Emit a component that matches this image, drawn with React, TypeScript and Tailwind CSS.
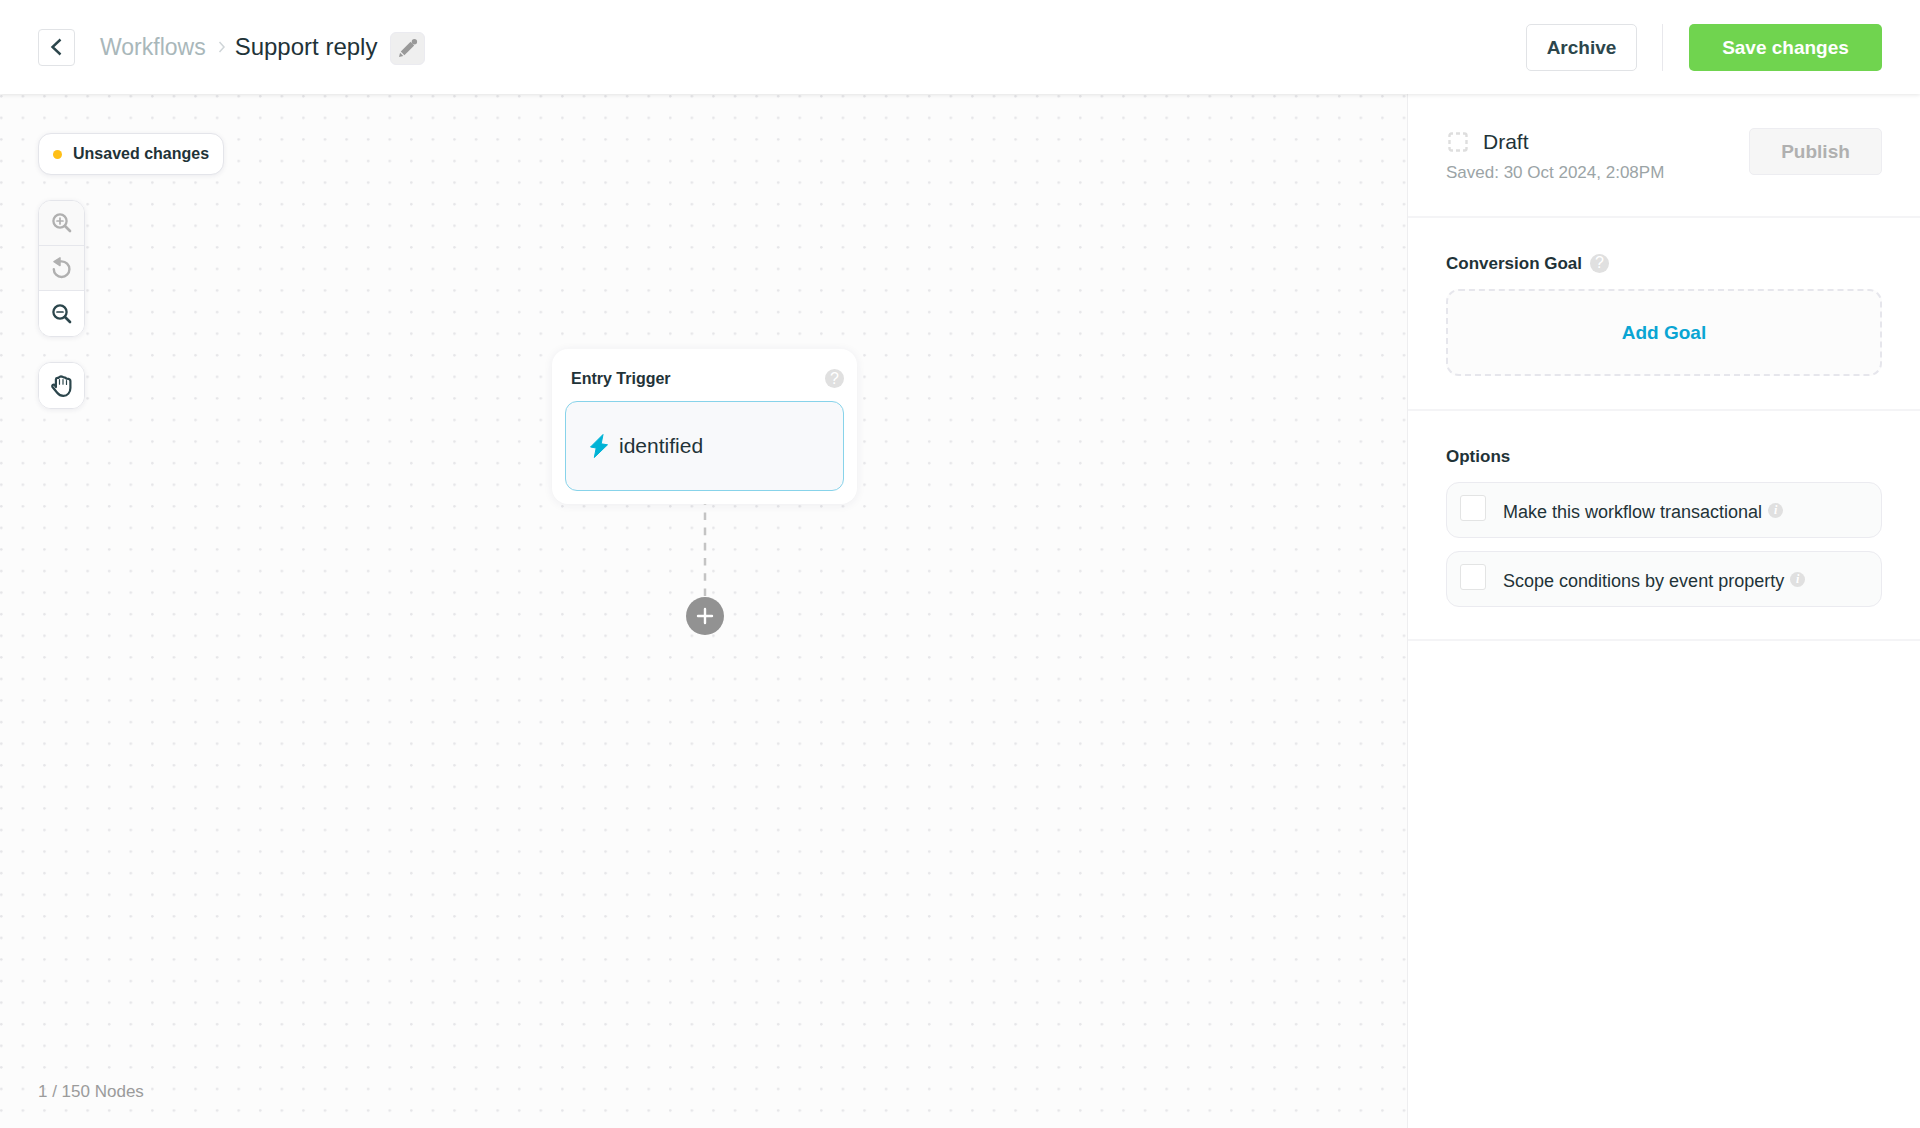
import type { ReactNode } from 'react'

function HelpBadge() {
  return (
    <button
      type="button"
      aria-label="Help"
      className="flex size-[19px] shrink-0 items-center justify-center rounded-full bg-[#e0e0e0] text-base leading-none text-white"
    >
      ?
    </button>
  )
}

function InfoBadge() {
  return (
    <span className="flex size-[15px] shrink-0 items-center justify-center rounded-full bg-[#e0e0e0] font-['Liberation_Serif',serif] text-xs leading-none font-bold text-white italic">
      i
    </span>
  )
}

function MagnifierIcon({ plus = false }: { plus?: boolean }) {
  return (
    <svg width="20" height="20" viewBox="0 0 20 20" fill="none" stroke="currentColor" strokeLinecap="round">
      <circle cx="8" cy="8" r="6.6" strokeWidth="2.3" />
      <path d="M13 13l5 5" strokeWidth="2.7" />
      <path d={plus ? 'M5 8h6M8 5v6' : 'M5 8h6'} strokeWidth="1.7" />
    </svg>
  )
}

function ResetIcon() {
  return (
    <svg width="19" height="22" viewBox="0 0 19 22" fill="none" stroke="currentColor">
      <path d="M1.8 12.2a7.8 7.8 0 1 0 7.8-7.8H8" strokeWidth="2.4" strokeLinecap="round" />
      <path d="M2 4.6L8 .9v7.6z" fill="currentColor" strokeWidth="1.5" strokeLinejoin="round" />
    </svg>
  )
}

function HandIcon() {
  return (
    <svg width="21" height="22" viewBox="0 0 21 22" fill="none" stroke="currentColor" strokeLinecap="round" strokeLinejoin="round">
      <path
        d="M4.9 12V4.6c0-1 .6-1.6 1.5-1.7l1.2-.1c.4-.9 1.2-1.4 2.4-1.5 1.2 0 2 .4 2.5 1.1 1.4-.1 2.5.3 3 1.3 2.2 0 3.9.6 3.9 2.4v6.9c0 4.5-2.9 7.9-7 7.9-3 0-4.7-1.2-6.2-3.1L1.5 12c-.8-1.6.7-2.8 2-2.2z"
        strokeWidth="2.2"
      />
      <path d="M8.5 4.5v4.7M12 4.5v4.7M15.5 5.5v3.9" strokeWidth="1.2" />
    </svg>
  )
}

function PencilIcon() {
  return (
    <svg width="20" height="20" viewBox="0 0 20 20" fill="#999">
      <path d="M1 19l1.1-4.2 3.2 3.1z" />
      <path d="M2.8 13.4L12.6 3.8l3.6 3.6L6.4 17.200z" />
      <circle cx="16.4" cy="3.700" r="2.700" />
    </svg>
  )
}

function ToolButton({ label, disabled, children }: { label: string; disabled?: boolean; children: ReactNode }) {
  return (
    <button
      type="button"
      aria-label={label}
      disabled={disabled}
      className="flex h-[45px] w-[45px] items-center justify-center bg-white text-[#2c464c] disabled:bg-[#f9f9f9] disabled:text-[#b0b0b0]"
    >
      {children}
    </button>
  )
}

function Header() {
  return (
    <header className="relative z-10 flex h-[94px] shrink-0 items-center justify-between bg-white px-[38px] shadow-[0_1px_4px_rgba(0,0,0,0.1)]">
      <nav className="flex items-center text-2xl">
        <button
          type="button"
          aria-label="Back"
          className="mr-[25px] flex size-[37px] items-center justify-center rounded border border-[#e1e3e6] pr-[2px] text-[#2c464c]"
        >
          <svg width="12" height="18" viewBox="0 0 12 18" fill="none" stroke="currentColor" strokeWidth="2.4">
            <path d="M10.500 1.500L2.500 9l8 7.500" />
          </svg>
        </button>
        <a href="#workflows" className="text-[23px] text-[#a9b7ba]">
          Workflows
        </a>
        <svg className="mr-[9px] ml-3" width="8" height="12" viewBox="0 0 8 12" fill="none" stroke="#cfd5d8" strokeWidth="1.500">
          <path d="M1.500 1l4.500 5-4.500 5" />
        </svg>
        <h1 className="text-[#1f3338]">Support reply</h1>
        <button
          type="button"
          aria-label="Rename workflow"
          className="mt-[2px] ml-[13px] flex h-[33px] w-[35px] items-center justify-center rounded-md border border-[#ebebf0] bg-[#efefef]"
        >
          <PencilIcon />
        </button>
      </nav>
      <div className="flex h-[47px] items-stretch text-[19px] font-bold">
        <button type="button" className="w-[111px] rounded-[5px] border border-[#e1e3e6] pt-[2px] text-[#2c464c]">
          Archive
        </button>
        <div className="mr-[26px] ml-[25px] w-px bg-[#e8e8ec]" />
        <button type="button" className="w-[193px] rounded-[5px] bg-[#70d44f] pt-[2px] text-white">
          Save changes
        </button>
      </div>
    </header>
  )
}

function CanvasTools() {
  return (
    <div className="absolute top-[39px] left-[38px] flex flex-col items-start">
      <div className="flex h-[42px] items-center gap-[11px] rounded-[13px] border border-[#e4e5ea] bg-white px-[14px] text-base font-bold text-[#1f3338] shadow-[0_1px_5px_rgba(40,40,80,0.08)]">
        <span className="size-[9px] rounded-full bg-[#ffbf17]" />
        Unsaved changes
      </div>
      <div className="mt-[25px] flex flex-col divide-y divide-[#e6e7ec] overflow-hidden rounded-[13px] border border-[#e4e5ea] shadow-[0_1px_5px_rgba(40,40,80,0.08)]">
        <ToolButton label="Zoom in" disabled>
          <MagnifierIcon plus />
        </ToolButton>
        <ToolButton label="Reset zoom" disabled>
          <ResetIcon />
        </ToolButton>
        <ToolButton label="Zoom out">
          <MagnifierIcon />
        </ToolButton>
      </div>
      <div className="mt-[25px] overflow-hidden rounded-[13px] border border-[#e4e5ea] shadow-[0_1px_5px_rgba(40,40,80,0.08)]">
        <ToolButton label="Pan">
          <HandIcon />
        </ToolButton>
      </div>
    </div>
  )
}

function Canvas() {
  return (
    <main className="relative flex flex-1 flex-col items-center overflow-hidden bg-[#fcfcfc] pt-[255px] pl-[2px]">
      {/* dot grid */}
      <svg className="absolute inset-0 size-full" aria-hidden="true">
        <defs>
          <pattern id="dots" width="21.58" height="21.58" patternUnits="userSpaceOnUse">
            <circle cx="1.3" cy="2.3" r="1.300" fill="#e5e5e8" />
          </pattern>
        </defs>
        <rect width="100%" height="100%" fill="url(#dots)" />
      </svg>

      <CanvasTools />

      <section className="relative w-[305px] rounded-2xl bg-white p-[13px] shadow-[0_1px_10px_rgba(40,40,80,0.07)]">
        <div className="flex h-[39px] items-center justify-between pb-[6px] pl-[6px]">
          <h2 className="text-base font-bold text-[#1f3338]">Entry Trigger</h2>
          <HelpBadge />
        </div>
        <button
          type="button"
          className="flex h-[90px] w-full items-center gap-[10px] rounded-xl border border-[#87d3ea] bg-[#f8f9fb] px-[23px] text-[21px] text-[#1f3338]"
        >
          <svg width="20" height="26" viewBox="0 0 20 26" fill="#00b3d6" stroke="#00b3d6" strokeWidth="1" strokeLinejoin="round">
            <path d="M14 1.500L1.500 14l5.700 1L5.300 24.500 18.500 11.800l-6.300-1z" />
          </svg>
          identified
        </button>
      </section>

      <svg className="relative" width="4" height="93" viewBox="0 0 4 93">
        <path d="M2 0v93" stroke="#c4c4c4" strokeWidth="2.500" strokeDasharray="7.600 7.600" strokeDashoffset="6.800" />
      </svg>
      <button
        type="button"
        aria-label="Add node"
        className="relative flex size-[38px] items-center justify-center rounded-full bg-[#929292] text-white"
      >
        <svg width="18" height="18" viewBox="0 0 18 18" stroke="currentColor" strokeWidth="2.400" strokeLinecap="round">
          <path d="M9 2v14M2 9h14" />
        </svg>
      </button>

      <p className="absolute bottom-6 left-[38px] text-[17px] text-[#9b9b9b]">1 / 150 Nodes</p>
    </main>
  )
}

function Option({ id, label }: { id: string; label: string }) {
  return (
    <div className="flex h-14 items-center rounded-[13px] border border-[#ebebf0] bg-[#fafbfb] px-[13px]">
      <input
        id={id}
        type="checkbox"
        className="mb-1 size-[26px] appearance-none rounded-[3px] border border-[#e3e4e4] bg-white"
      />
      <label htmlFor={id} className="mr-[6px] ml-[17px] pt-1 text-lg text-[#1f3338]">
        {label}
      </label>
      <InfoBadge />
    </div>
  )
}

function Sidebar() {
  return (
    <aside className="w-[513px] shrink-0 border-l border-[#eeeef0] bg-white text-[#1f3338]">
      <section className="flex h-[124px] justify-between border-b-2 border-[#f4f4f6] px-[38px] pt-[34px]">
        <div>
          <h2 className="flex items-center gap-[13px] text-[21px] leading-[28px]">
            <svg width="24" height="24" viewBox="0 0 24 24" fill="none" stroke="#dedede" strokeWidth="2.400">
              <path d="M3.500 7V5.500a2 2 0 0 1 2-2H7M17 3.500h1.500a2 2 0 0 1 2 2V7M20.500 17v1.500a2 2 0 0 1-2 2H17M7 20.500H5.500a2 2 0 0 1-2-2V17M10 3.500h4M10 20.500h4M3.500 10v4M20.500 10v4" />
            </svg>
            Draft
          </h2>
          <p className="mt-1 text-[17px] leading-[26px] text-[#9ba4a6]">Saved: 30 Oct 2024, 2:08PM</p>
        </div>
        <button
          type="button"
          disabled
          className="h-[47px] w-[133px] rounded-[5px] border border-[#ededf1] bg-[#f6f6f6] pt-[2px] text-[19px] font-bold text-[#b0b0b0]"
        >
          Publish
        </button>
      </section>

      <section className="border-b-2 border-[#f4f4f6] px-[38px] pt-8 pb-[33px]">
        <div className="flex h-[26px] items-center gap-2">
          <h3 className="pt-[2px] text-[17px] font-bold">Conversion Goal</h3>
          <HelpBadge />
        </div>
        <button
          type="button"
          className="mt-[13px] h-[87px] w-full rounded-[13px] border-2 border-dashed border-[#e6e6ec] bg-[#fcfcfc] pt-[2px] text-[19px] font-bold text-[#0aa5d3]"
        >
          Add Goal
        </button>
      </section>

      <section className="border-b-2 border-[#f4f4f6] px-[38px] py-8">
        <h3 className="pt-[2px] text-[17px] leading-[24px] font-bold">Options</h3>
        <div className="mt-[13px] flex flex-col gap-[13px]">
          <Option id="transactional" label="Make this workflow transactional" />
          <Option id="scope" label="Scope conditions by event property" />
        </div>
      </section>
    </aside>
  )
}

export default function App() {
  return (
    <div className="flex min-h-screen flex-col font-['Liberation_Sans',Arial,sans-serif]">
      <Header />
      <div className="flex flex-1">
        <Canvas />
        <Sidebar />
      </div>
    </div>
  )
}
